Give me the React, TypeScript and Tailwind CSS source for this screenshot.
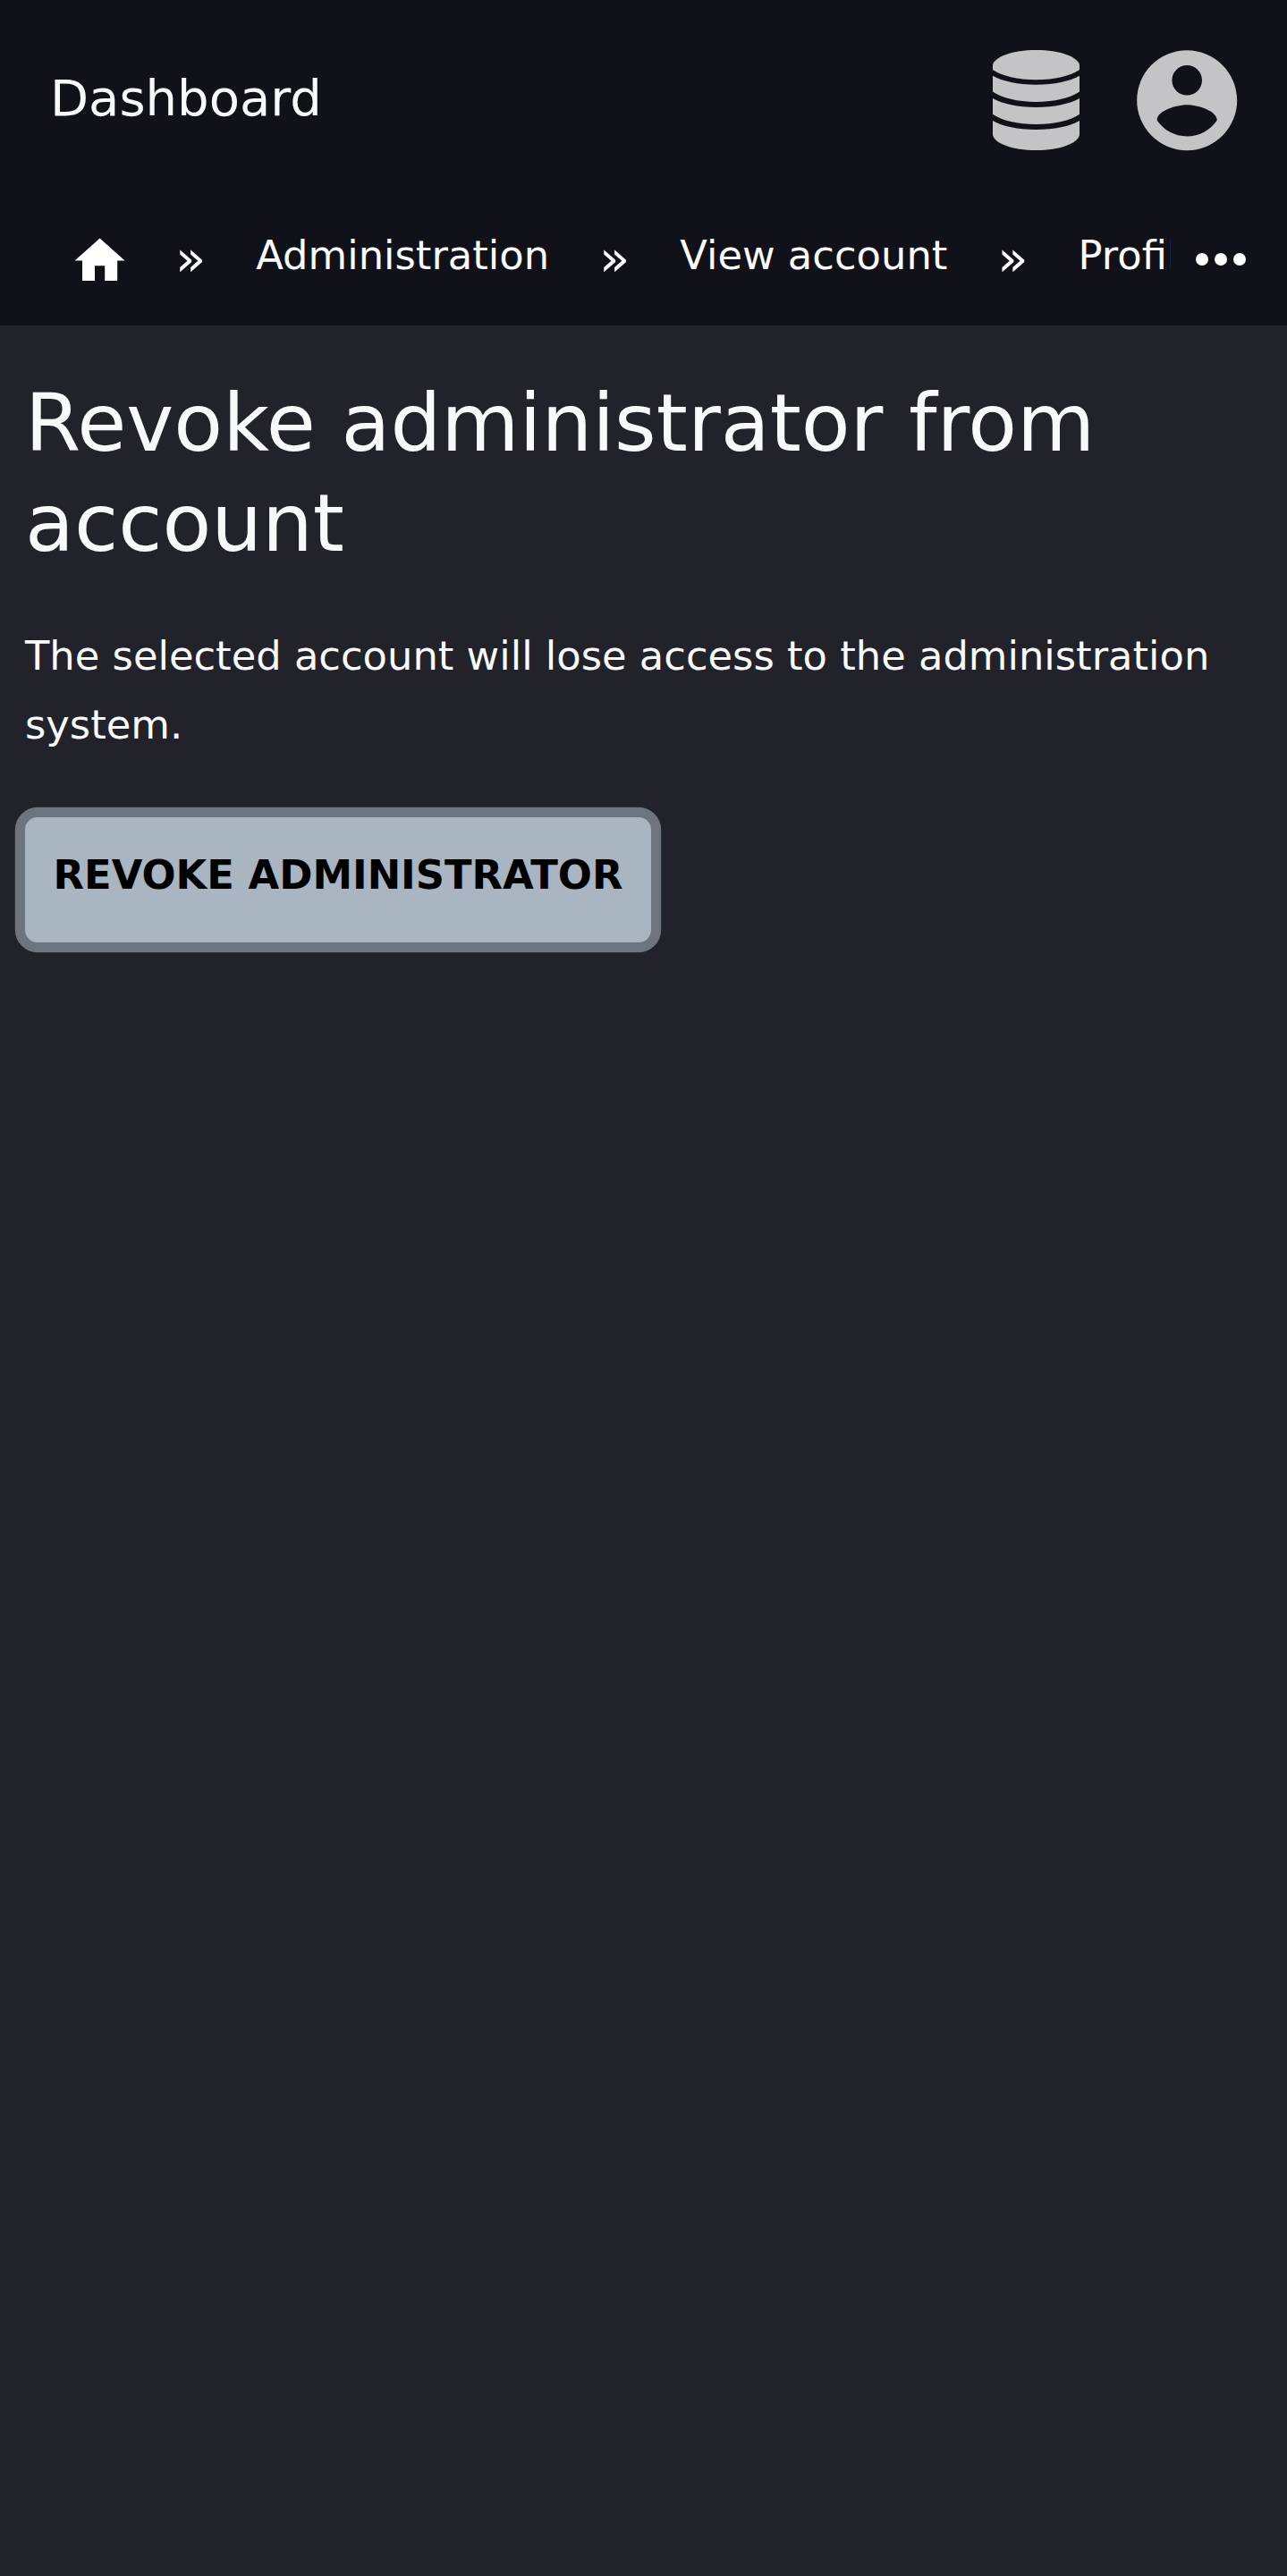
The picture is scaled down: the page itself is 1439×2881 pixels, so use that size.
import React from "react";

function DatabaseIcon() {
  return (
    <svg className="h-[112px] w-[97px] fill-[#c4c4c6]" viewBox="0 0 97 112">
      <path d="M0 16.5C2 7.5 22 0 48.5 0S95 7.5 97 16.5V22C87 29 69 33.2 48.5 33.2S10 29 0 22Z" />
      <path d="M0 28.8C11 35 28 38.7 48.5 38.7S86 35 97 28.8V46.6C87 53.6 69 58 48.5 58S10 53.6 0 46.6Z" />
      <path d="M0 54C11 60.2 28 63.9 48.5 63.9S86 60.2 97 54V71.8C87 78.8 69 83.1 48.5 83.1S10 78.8 0 71.8Z" />
      <path d="M0 79C11 85.2 28 89 48.5 89S86 85.2 97 79V95C95 104.5 75 112 48.5 112S2 104.5 0 95Z" />
    </svg>
  );
}

function AccountIcon() {
  return (
    <svg className="size-[134.4px] fill-[#c4c4c6]" viewBox="0 0 24 24">
      <path d="M12 19.2c-2.5 0-4.71-1.28-6-3.2.03-2 4-3.1 6-3.1s5.97 1.1 6 3.1a7.232 7.232 0 0 1-6 3.2M12 5a3 3 0 0 1 3 3 3 3 0 0 1-3 3 3 3 0 0 1-3-3 3 3 0 0 1 3-3m0-3A10 10 0 0 0 2 12a10 10 0 0 0 10 10 10 10 0 0 0 10-10c0-5.53-4.5-10-10-10z" />
    </svg>
  );
}

function Separator() {
  return <span className="mx-14 -mt-[3px] shrink-0 text-[56px] leading-[67.2px]">»</span>;
}

function Crumb({ children }: { children: React.ReactNode }) {
  return (
    <a href="#" className="-mt-1.5 shrink-0 text-[44.8px] leading-[67.2px]">
      {children}
    </a>
  );
}

export default function App() {
  return (
    <div className="min-h-[2881px] bg-[#22222b] font-['DejaVu_Sans',sans-serif] text-[#f8f9fb]">
      <header className="h-[364px] bg-[#11111a]">
        <div className="flex h-56 items-center pr-[45.1px] pl-14">
          <a href="#" className="pb-1 text-[56px] leading-[84px]">Dashboard</a>
          <div className="ml-auto flex items-center">
            <div className="mr-[52.5px]">
              <DatabaseIcon />
            </div>
            <AccountIcon />
          </div>
        </div>
        <div className="flex pt-[18px]">
          <nav className="flex h-[110px] w-[1309px] items-start overflow-hidden pt-4 pl-[84px] whitespace-nowrap">
            <a href="#" className="flex w-14 shrink-0 justify-center">
              <svg className="size-[67.2px] shrink-0 fill-white" viewBox="0 0 24 24">
                <path d="M10 20v-6h4v6h5v-8h3L12 3 2 12h3v8z" />
              </svg>
            </a>
            <Separator />
            <Crumb>Administration</Crumb>
            <Separator />
            <Crumb>View account</Crumb>
            <Separator />
            <Crumb>Profile</Crumb>
          </nav>
          <button className="mt-[6.4px] ml-[14px] size-[84px]">
            <svg className="size-[84px] fill-white" viewBox="0 0 24 24">
              <circle cx="6" cy="12" r="2" />
              <circle cx="12" cy="12" r="2" />
              <circle cx="18" cy="12" r="2" />
            </svg>
          </button>
        </div>
      </header>
      <main className="px-7 pt-[53px]">
        <h1 className="text-[89.6px] leading-[112px]">Revoke administrator from account</h1>
        <p className="mt-[54px] text-[44.8px] leading-[77px]">
          The selected account will lose access to the administration system.
        </p>
        <button className="mt-[64.6px] block h-[140px] w-[700px] rounded-[14px] bg-[#a9b5c1] pb-[10px] text-[44.8px] leading-[67.2px] font-bold whitespace-nowrap text-black uppercase shadow-[0_0_0_11.2px_#6c757d]">
          Revoke administrator
        </button>
      </main>
    </div>
  );
}
